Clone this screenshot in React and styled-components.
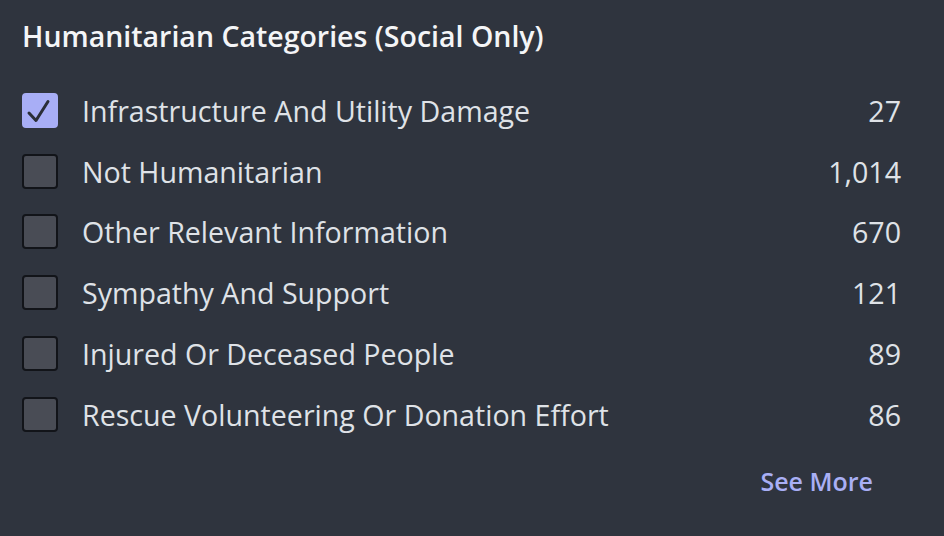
import React, { useState } from 'react';
import styled, { createGlobalStyle } from 'styled-components';

const GlobalStyle = createGlobalStyle`
    html, body {
        margin: 0;
        padding: 0;
        background: #2f343e;
    }
    body {
        font-family: "Open Sans", Roboto, "Liberation Sans", sans-serif;
    }
`;

const Panel = styled.div`
    width: 944px;
    height: 536px;
    box-sizing: border-box;
    padding: 16px 43px 0 22px;
    background: #2f343e;
    display: flex;
    flex-direction: column;
`;

const Title = styled.h2`
    margin: 0 0 24px 0;
    font-size: 28.5px;
    line-height: 40px;
    font-weight: 600;
    color: #f4f5f7;
`;

const List = styled.div`
    display: flex;
    flex-direction: column;
`;

const Row = styled.label`
    display: flex;
    align-items: center;
    height: 60.8px;
    cursor: pointer;
`;

const Box = styled.span`
    position: relative;
    width: 36px;
    height: 35px;
    box-sizing: border-box;
    border-radius: 4px;
    flex-shrink: 0;
    background: ${(p) => (p.checked ? '#a8aef6' : '#494c55')};
    border: 2px solid ${(p) => (p.checked ? '#a8aef6' : '#121419')};

    svg {
        position: absolute;
        inset: -2px;
    }
`;

const Label = styled.span`
    flex: 1;
    margin-left: 24px;
    font-size: 28.6px;
    color: #dfe2e7;
`;

const Count = styled.span`
    font-size: 28.6px;
    color: #dfe2e7;
`;

const Footer = styled.div`
    display: flex;
    justify-content: flex-end;
    padding: 19px 28px 0 0;
`;

const SeeMore = styled.button`
    background: none;
    border: none;
    padding: 0;
    font-family: inherit;
    font-size: 25px;
    font-weight: 600;
    color: #a9aff5;
    cursor: pointer;
`;

const Check = () => (
    <svg width="36" height="35" viewBox="0 0 36 35" fill="none">
        <path d="M7 20 L14 27.5 L26 8.5" stroke="#2a2e38" strokeWidth="3" strokeLinecap="round" strokeLinejoin="round" />
    </svg>
);

const categories = [
    { name: 'Infrastructure And Utility Damage', count: '27', checked: true },
    { name: 'Not Humanitarian', count: '1,014' },
    { name: 'Other Relevant Information', count: '670' },
    { name: 'Sympathy And Support', count: '121' },
    { name: 'Injured Or Deceased People', count: '89' },
    { name: 'Rescue Volunteering Or Donation Effort', count: '86' },
];

export default function App() {
    const [checked, setChecked] = useState(categories.map((c) => !!c.checked));

    const toggle = (i) => {
        setChecked((prev) => prev.map((v, j) => (j === i ? !v : v)));
    };

    return (
        <>
            <GlobalStyle />
            <Panel>
                <Title>Humanitarian Categories (Social Only)</Title>
                <List>
                    {categories.map((c, i) => (
                        <Row key={c.name} onClick={() => toggle(i)}>
                            <Box checked={checked[i]}>{checked[i] && <Check />}</Box>
                            <Label>{c.name}</Label>
                            <Count>{c.count}</Count>
                        </Row>
                    ))}
                </List>
                <Footer>
                    <SeeMore>See More</SeeMore>
                </Footer>
            </Panel>
        </>
    );
}
